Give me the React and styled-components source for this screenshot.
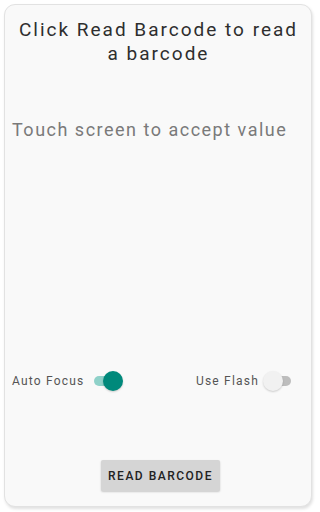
import React from "react";
import styled, { createGlobalStyle } from "styled-components";

const Global = createGlobalStyle`
  html, body { margin: 0; padding: 0; background: #ffffff; }
  body { font-family: Roboto, "Noto Sans", sans-serif; }
`;

const Page = styled.div`
  width: 320px;
  height: 512px;
  padding: 4px 8px 5px 4px;
  box-sizing: border-box;
`;

const Card = styled.div`
  height: 100%;
  box-sizing: border-box;
  background: #f9f9f9;
  border: 1px solid #e2e2e2;
  border-radius: 11px;
  box-shadow: 1px 2px 3px rgba(0, 0, 0, 0.12);
  display: flex;
  flex-direction: column;
  padding: 13px 6px 15px 7px;
`;

const Title = styled.h1`
  margin: 0;
  font-size: 19px;
  font-weight: 400;
  line-height: 24px;
  letter-spacing: 2px;
  text-align: center;
  color: #2e2e2e;
`;

const Value = styled.div`
  margin-top: 53px;
  font-size: 18px;
  letter-spacing: 1.5px;
  color: #7a7a7a;
`;

const Spacer = styled.div`
  flex: 1;
`;

const Options = styled.div`
  display: flex;
  justify-content: space-between;
  align-items: center;
  padding-right: 14px;
`;

const Option = styled.div`
  display: flex;
  align-items: center;
  gap: ${(p) => p.gap || 10}px;
  font-size: 12px;
  letter-spacing: 1.2px;
  color: #555;
`;

const Track = styled.div`
  position: relative;
  width: 24px;
  height: 10px;
  border-radius: 5px;
  background: ${(p) => (p.on ? "#8fd1c9" : "#bdbdbd")};
`;

const Thumb = styled.div`
  position: absolute;
  top: -5px;
  left: ${(p) => (p.on ? "9px" : "-4px")};
  width: 20px;
  height: 20px;
  border-radius: 50%;
  background: ${(p) => (p.on ? "#00897b" : "#f1f1f1")};
  box-shadow: 0 1px 2px rgba(0, 0, 0, 0.18);
`;

const Switch = ({ on }) => (
  <Track on={on}>
    <Thumb on={on} />
  </Track>
);

const ButtonRow = styled.div`
  display: flex;
  justify-content: center;
  margin-top: 72px;
`;

const Button = styled.button`
  font-family: Roboto, "Noto Sans", sans-serif;
  font-size: 12px;
  font-weight: 500;
  letter-spacing: 1.5px;
  color: #222;
  background: #d5d5d5;
  border: none;
  border-radius: 2px;
  padding: 0 7px;
  height: 31px;
  margin-left: 4px;
  box-shadow: 0 1px 2px rgba(0, 0, 0, 0.2);
`;

export default function App() {
  return (
    <>
      <Global />
      <Page>
        <Card>
          <Title>Click Read Barcode to read a barcode</Title>
          <Value>Touch screen to accept value</Value>
          <Spacer />
          <Options>
            <Option gap={10}>
              Auto Focus
              <Switch on />
            </Option>
            <Option gap={8}>
              Use Flash
              <Switch />
            </Option>
          </Options>
          <ButtonRow>
            <Button>READ BARCODE</Button>
          </ButtonRow>
        </Card>
      </Page>
    </>
  );
}
